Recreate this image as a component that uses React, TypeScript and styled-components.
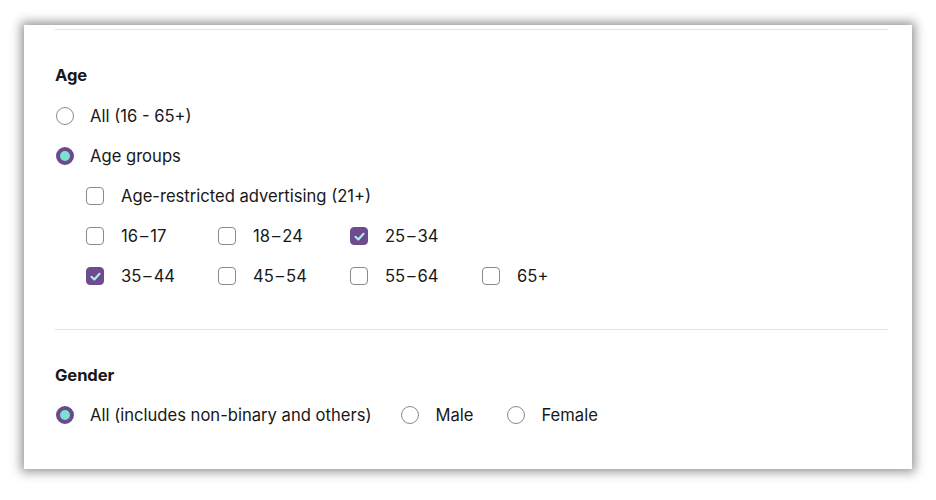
import React, { useState } from "react";
import styled, { createGlobalStyle } from "styled-components";

const Global = createGlobalStyle`
  html, body { margin: 0; padding: 0; background: #ffffff; }
  body { font-family: "Inter", "Noto Sans", sans-serif; color: #181818; }
  * { box-sizing: border-box; }
`;

const Page = styled.div`
  width: 936px;
  height: 500px;
  padding: 25px 24px 0 24px;
  background: #ffffff;
`;

const Card = styled.div`
  width: 888px;
  height: 444px;
  background: #ffffff;
  box-shadow: 0 0 10px 3px rgba(0, 0, 0, 0.42);
  padding: 4px 24px 0 31px;
  display: flex;
  flex-direction: column;
`;

const Divider = styled.div`
  height: 1px;
  background: #e2e2e2;
`;

const Section = styled.section`
  display: flex;
  flex-direction: column;
  padding: 33px 0 33px 0;
`;

const Heading = styled.h3`
  margin: 0 0 8px 0;
  font-size: 16.6px;
  line-height: 24px;
  font-weight: 700;
  letter-spacing: -0.1px;
`;

const Row = styled.div<{ $h?: number }>`
  display: flex;
  align-items: center;
  height: ${(p) => p.$h ?? 40}px;
`;

const Grid = styled.div`
  display: grid;
  grid-template-columns: repeat(4, 132px);
  padding-left: 31px;
`;

const Option = styled.label<{ $gap?: number }>`
  display: flex;
  align-items: center;
  height: 40px;
  gap: 17px;
  margin-right: ${(p) => p.$gap ?? 0}px;
  font-size: 16.6px;
  cursor: pointer;
  white-space: nowrap;
`;

const Wide = styled.div`
  grid-column: 1 / span 4;
`;

const Dash = styled.span`
  padding: 0 2px;
`;

const RadioDot = styled.span<{ $on: boolean }>`
  width: 18px;
  height: 18px;
  margin-left: 1px;
  margin-right: -1px;
  border-radius: 50%;
  flex: none;
  background: ${(p) => (p.$on ? "#7de0d2" : "#ffffff")};
  border: ${(p) => (p.$on ? "4px solid #6b4a8c" : "1px solid #8a8a8a")};
`;

const Box = styled.span<{ $on: boolean }>`
  width: 18px;
  height: 18px;
  border-radius: 4px;
  flex: none;
  display: flex;
  align-items: center;
  justify-content: center;
  background: ${(p) => (p.$on ? "#6d4b8f" : "#ffffff")};
  border: ${(p) => (p.$on ? "1px solid #6d4b8f" : "1px solid #8a8a8a")};
`;

const Radio = ({ on, label, gap }: { on: boolean; label: string; gap?: number }) => (
  <Option $gap={gap}>
    <RadioDot $on={on} />
    <span>{label}</span>
  </Option>
);

const Check = ({ on, label }: { on: boolean; label: string }) => {
  const parts = label.split("–");
  return (
    <Option>
      <Box $on={on}>
        {on && (
          <svg width="13" height="13" viewBox="0 0 12 12">
            <path d="M2.3 6.3 L4.9 8.7 L9.7 3.5" fill="none" stroke="#b2ecec" strokeWidth="2" strokeLinecap="round" strokeLinejoin="round" />
          </svg>
        )}
      </Box>
      <span>
        {parts.length === 2 ? (
          <>
            {parts[0]}
            <Dash>–</Dash>
            {parts[1]}
          </>
        ) : (
          label
        )}
      </span>
    </Option>
  );
};

export default function App() {
  const [age] = useState("groups");
  return (
    <>
      <Global />
      <Page>
        <Card>
          <Divider />
          <Section>
            <Heading>Age</Heading>
            <Row $h={41}>
              <Radio on={age === "all"} label="All (16 - 65+)" />
            </Row>
            <Row>
              <Radio on={age === "groups"} label="Age groups" />
            </Row>
            <Grid>
              <Wide>
                <Check on={false} label="Age-restricted advertising (21+)" />
              </Wide>
              <Check on={false} label="16–17" />
              <Check on={false} label="18–24" />
              <Check on={true} label="25–34" />
              <span />
              <Check on={true} label="35–44" />
              <Check on={false} label="45–54" />
              <Check on={false} label="55–64" />
              <Check on={false} label="65+" />
            </Grid>
          </Section>
          <Divider />
          <Section>
            <Heading>Gender</Heading>
            <Row>
              <Radio on={true} label="All (includes non-binary and others)" gap={29} />
              <Radio on={false} label="Male" gap={33} />
              <Radio on={false} label="Female" />
            </Row>
          </Section>
        </Card>
      </Page>
    </>
  );
}
